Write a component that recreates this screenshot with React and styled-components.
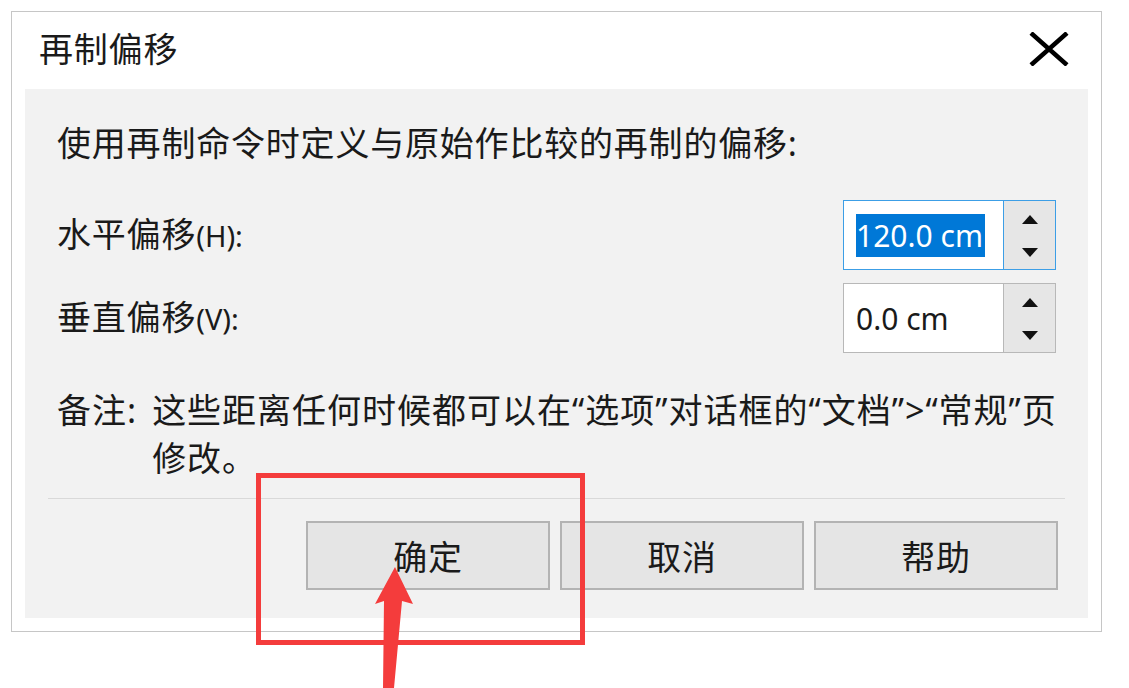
import React from 'react';
import styled, { createGlobalStyle } from 'styled-components';

const GlobalStyle = createGlobalStyle`
  html, body {
    margin: 0;
    padding: 0;
    background: #ffffff;
  }
  body {
    font-family: "Noto Sans", "Noto Sans CJK SC", sans-serif;
    color: #1a1a1a;
  }
`;

const Page = styled.div`
  position: relative;
  width: 1129px;
  height: 688px;
  overflow: hidden;
  padding: 11px 0 0 11px;
  box-sizing: border-box;
`;

const Dialog = styled.div`
  width: 1091px;
  height: 621px;
  box-sizing: border-box;
  border: 1px solid #c6c6c6;
  background: #ffffff;
  display: flex;
  flex-direction: column;
  padding: 0 13px 13px 13px;
`;

const TitleBar = styled.div`
  height: 77px;
  display: flex;
  align-items: center;
  justify-content: space-between;
  padding: 0 19px 4px 14px;
  box-sizing: border-box;
`;

const Title = styled.div`
  font-size: 34px;
  line-height: 1;
  letter-spacing: 0.8px;
  color: #1a1a1a;
`;

const CloseButton = styled.button`
  border: 0;
  background: transparent;
  padding: 0;
  width: 40px;
  height: 36px;
  display: flex;
  align-items: center;
  justify-content: center;
  cursor: pointer;
`;

const Panel = styled.div`
  flex: 1;
  background: #f2f2f2;
  padding: 30px 32px 0 32px;
  display: flex;
  flex-direction: column;
`;

const Text = styled.div`
  font-size: 34px;
  line-height: 48px;
  letter-spacing: 0.8px;
  white-space: nowrap;
`;

const Mnemonic = styled.span`
  font-size: 29px;
  letter-spacing: 0;
`;

const FieldRow = styled.div`
  display: flex;
  align-items: center;
  justify-content: space-between;
  margin-top: ${(p) => p.$gap}px;
`;

const Spin = styled.div`
  width: 213px;
  height: 70px;
  box-sizing: border-box;
  display: flex;
  border: 1px solid ${(p) => (p.$focused ? '#3c9ee6' : '#b8b8b8')};
  background: #ffffff;
`;

const SpinInput = styled.div`
  flex: 1;
  display: flex;
  align-items: center;
  padding-left: 12px;
  font-size: 30px;
`;

const Selected = styled.span`
  background: #0078d7;
  color: #ffffff;
  line-height: 43px;
  padding-right: 2px;
`;

const SpinButtons = styled.div`
  width: 52px;
  background: #e6e6e6;
  border-left: 1px solid ${(p) => (p.$focused ? '#3c9ee6' : '#b8b8b8')};
  display: flex;
  flex-direction: column;
  align-items: center;
  justify-content: space-between;
  padding: 14px 0 12px;
  box-sizing: border-box;
`;

const Note = styled.div`
  display: grid;
  grid-template-columns: auto 1fr;
  column-gap: 15px;
  margin-top: 33px;
  font-size: 34px;
  line-height: 48px;
  letter-spacing: 1px;
  white-space: nowrap;
`;

const Separator = styled.div`
  height: 1px;
  background: #d9d9d9;
  margin: 16px -9px 0;
`;

const ButtonRow = styled.div`
  display: flex;
  justify-content: flex-end;
  gap: 10px;
  margin: 22px -2px 0 0;
`;

const Button = styled.button`
  width: 244px;
  height: 69px;
  box-sizing: border-box;
  background: #e5e5e5;
  border: 2px solid #b3b3b3;
  font-family: "Noto Sans", "Noto Sans CJK SC", sans-serif;
  font-size: 34px;
  letter-spacing: 0.8px;
  color: #1a1a1a;
  padding: 0;
  cursor: pointer;
`;

const Highlight = styled.div`
  position: absolute;
  left: 256px;
  top: 473px;
  width: 329px;
  height: 172px;
  box-sizing: border-box;
  border: 5px solid #f43c3c;
`;

const Arrow = styled.svg`
  position: absolute;
  left: 370px;
  top: 560px;
`;

const Triangle = ({ up }) => (
  <svg width="16" height="9" viewBox="0 0 16 9">
    <polygon points={up ? '8,0 16,9 0,9' : '0,0 16,0 8,9'} fill="#111" />
  </svg>
);

const SpinBox = ({ value, focused }) => (
  <Spin $focused={focused}>
    <SpinInput>{focused ? <Selected>{value}</Selected> : value}</SpinInput>
    <SpinButtons $focused={focused}>
      <Triangle up />
      <Triangle />
    </SpinButtons>
  </Spin>
);

export default function App() {
  return (
    <Page>
      <GlobalStyle />
      <Dialog>
        <TitleBar>
          <Title>再制偏移</Title>
          <CloseButton aria-label="关闭">
            <svg width="40" height="34" viewBox="0 0 40 34">
              <path d="M2 1 L38 33 M38 1 L2 33" stroke="#000" strokeWidth="4.5" fill="none" />
            </svg>
          </CloseButton>
        </TitleBar>
        <Panel>
          <Text>使用再制命令时定义与原始作比较的再制的偏移:</Text>
          <FieldRow $gap={33}>
            <Text>
              水平偏移<Mnemonic>(H):</Mnemonic>
            </Text>
            <SpinBox value="120.0 cm" focused />
          </FieldRow>
          <FieldRow $gap={13}>
            <Text>
              垂直偏移<Mnemonic>(V):</Mnemonic>
            </Text>
            <SpinBox value="0.0 cm" />
          </FieldRow>
          <Note>
            <span>备注:</span>
            <span>
              这些距离任何时候都可以在“选项”对话框的“文档”&gt;“常规”页
              <br />
              修改。
            </span>
          </Note>
          <Separator />
          <ButtonRow>
            <Button>确定</Button>
            <Button>取消</Button>
            <Button>帮助</Button>
          </ButtonRow>
        </Panel>
      </Dialog>
      <Highlight />
      <Arrow width="50" height="128" viewBox="0 0 50 128">
        <polygon points="25,7 5,44 14,41 13,128 24,128 32,41 43,44" fill="#f43c3c" />
      </Arrow>
    </Page>
  );
}
